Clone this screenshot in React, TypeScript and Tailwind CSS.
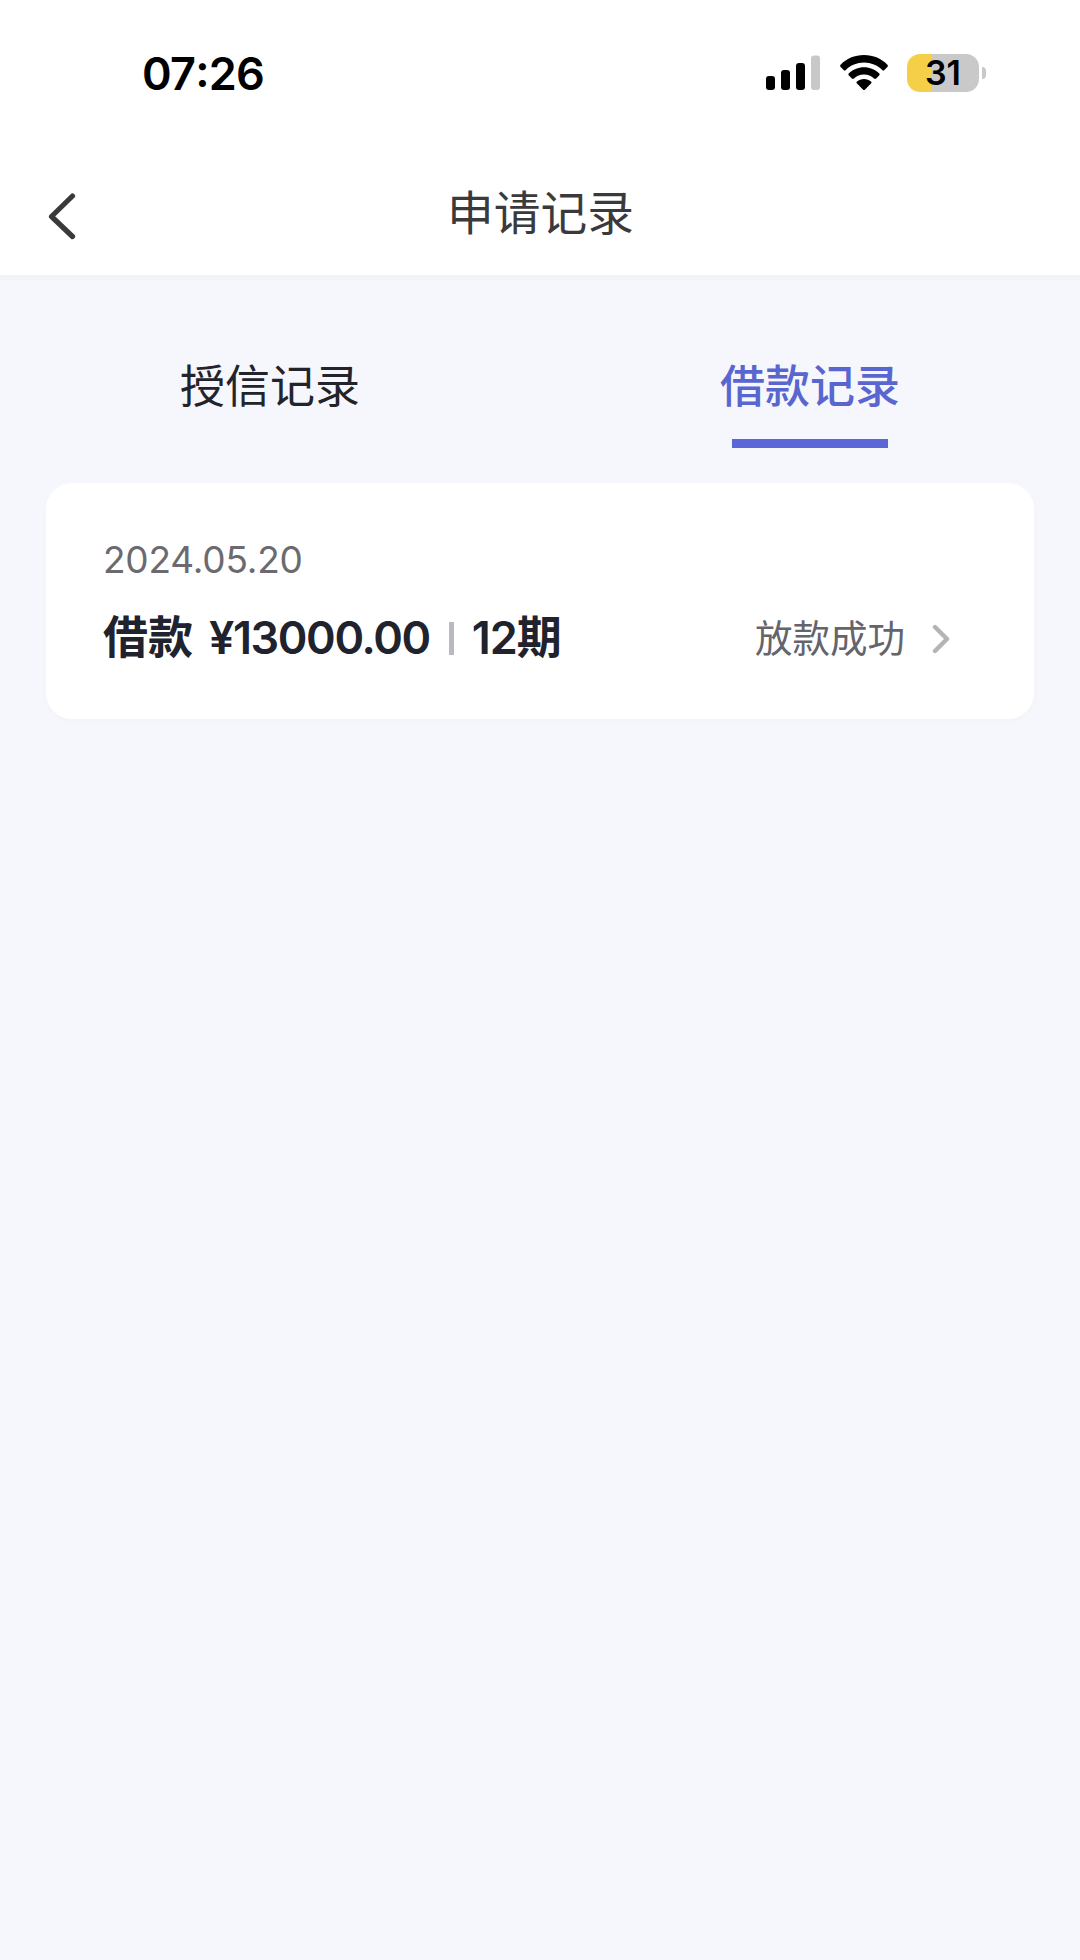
const tabs = [
  { key: "credit", label: "授信记录", active: false },
  { key: "loan", label: "借款记录", active: true },
];

const records = [
  {
    date: "2024.05.20",
    type: "借款",
    amount: "¥13000.00",
    term: "12",
    status: "放款成功",
  },
];

function StatusBar() {
  return (
    <div className="flex h-[146px] items-center justify-between pl-[142px] pr-[94px]">
      <span className="flex pt-[2px] text-[45px] leading-[54px] font-semibold text-black tracking-[-0.8px]">
        <span>07</span>
        <span className="-mt-[3px]">:</span>
        <span>26</span>
      </span>
      <div className="flex items-center">
        {/* Signal */}
        <svg width="56" height="36" viewBox="0 0 56 36" className="mr-[19px]">
          <rect x="1" y="21" width="9" height="14" rx="3" fill="#000" />
          <rect x="16" y="15" width="9" height="20" rx="3" fill="#000" />
          <rect x="31" y="8" width="9" height="27" rx="3" fill="#000" />
          <rect x="46" y="0.500" width="9" height="34.500" rx="3" fill="#c8c8c8" />
        </svg>
        {/* Wifi */}
        <svg width="48" height="36" viewBox="0 0 48 36" className="mr-[19px]">
          <path
            d="M24 0C14.700 0 6.200 3.700.600 9.700c-.700.700-.700 1.500 0 2.200l3 3c.700.700 1.500.700 2.200 0C10.500 10.200 17 7.400 24 7.400s13.500 2.800 18.200 7.500c.700.700 1.500.700 2.200 0l3-3c.700-.700.700-1.500 0-2.200C41.800 3.700 33.300 0 24 0Z"
            fill="#000"
          />
          <path
            d="M24 12.200c-5.900 0-11.200 2.300-15.100 6.100-.700.700-.700 1.500 0 2.200l3 3c.600.600 1.400.600 2.100 0 2.600-2.500 6.100-4 10-4s7.400 1.500 10 4c.700.600 1.500.600 2.100 0l3-3c.700-.700.700-1.500 0-2.200C35.200 14.500 29.900 12.200 24 12.200Z"
            fill="#000"
          />
          <path
            d="M24 24c-2.700 0-5.100.9-7 2.500-.7.600-.7 1.400 0 2l5.900 6c.7.700 1.500.7 2.200 0l5.900-6c.7-.6.7-1.400 0-2C29.100 24.900 26.700 24 24 24Z"
            fill="#000"
          />
        </svg>
        {/* Battery */}
        <div className="flex h-[38px] w-[72px] items-center justify-center rounded-[13px] bg-linear-to-r from-[#f5cf48] from-[33%] to-[#c9c9c9] to-[33%]">
          <span className="text-[34px] leading-[42px] font-semibold text-black">31</span>
        </div>
        <div className="ml-[3px] h-[12px] w-[4px] rounded-r-full bg-[#c9c9c9]" />
      </div>
    </div>
  );
}

function NavBar() {
  return (
    <div className="grid h-[129px] grid-cols-[150px_1fr_150px]">
      <button className="flex items-start pt-[46px] pl-[47px]">
        <svg width="30" height="48" viewBox="0 0 30 48" fill="none">
          <path
            d="M25.500 4 4.500 24.500l21 20"
            stroke="#3a3a3c"
            strokeWidth="5.200"
            strokeLinecap="round"
            strokeLinejoin="round"
          />
        </svg>
      </button>
      <h1 className="pt-[34px] pl-[1px] text-center text-[46.700px] leading-[66px] text-[#3a3a3c]">
        申请记录
      </h1>
    </div>
  );
}

export default function App() {
  return (
    <div className="min-h-[1960px] w-[1080px] bg-[#f5f7fc] font-['Inter','Noto_Sans_CJK_SC',sans-serif]">
      <header className="bg-white">
        <StatusBar />
        <NavBar />
      </header>
      <div className="h-[5px] bg-[#f2f2f7]" />

      <nav className="grid h-[203px] grid-cols-2">
        {tabs.map((tab) => (
          <div key={tab.key} className="flex flex-col items-center pt-[74px]">
            <span
              className={
                tab.active
                  ? "text-[45px] leading-[66px] font-medium text-[#5a66cf]"
                  : "text-[45px] leading-[66px] text-[#23232b]"
              }
            >
              {tab.label}
            </span>
            {tab.active && <div className="mt-[19px] h-[9px] w-[156px] bg-[#5b67d6]" />}
          </div>
        ))}
      </nav>

      <main className="px-[46px]">
        {records.map((record) => (
          <div
            key={record.date}
            className="h-[236px] rounded-[26px] bg-white pt-[54px] pr-[83px] pl-[57px] shadow-[0_2px_6px_rgba(0,0,0,0.02)]"
          >
            <p className="text-[37px] leading-[46px] text-[#6a6a70] tracking-[-0.2px]">
              {record.date}
            </p>
            <div className="mt-[22px] flex h-[66px] items-center justify-between">
              <div className="flex items-center text-[45px] leading-[66px] font-semibold text-[#20232d]">
                <span className="font-bold">{record.type}</span>
                <span className="ml-[16px] font-[560] tracking-[-1.400px]">{record.amount}</span>
                <span className="mr-[18px] ml-[19px] h-[33px] w-[5px] bg-[#b9bac0]" />
                <span className="font-[560] tracking-[-1px]">{record.term}</span>
                <span className="font-bold">期</span>
              </div>
              <div className="flex items-center pt-[1px]">
                <span className="pt-[1px] text-[37.500px] leading-[60px] text-[#64646b]">
                  {record.status}
                </span>
                <svg width="20" height="30" viewBox="0 0 20 30" fill="none" className="ml-[26px]">
                  <path
                    d="M4 3l12 12L4 27"
                    stroke="#b4b4b6"
                    strokeWidth="4.400"
                    strokeLinecap="round"
                    strokeLinejoin="round"
                  />
                </svg>
              </div>
            </div>
          </div>
        ))}
      </main>
    </div>
  );
}
